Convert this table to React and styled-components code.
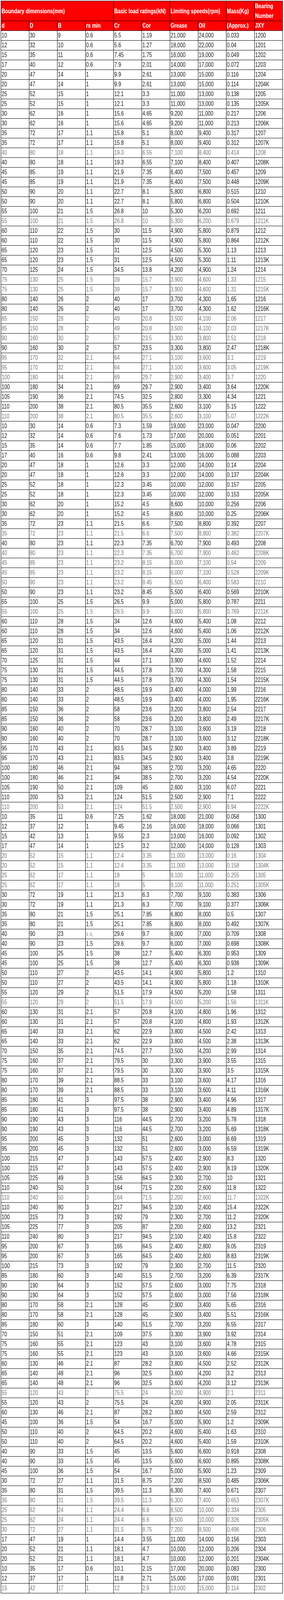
import React from "react";
import styled, {createGlobalStyle} from "styled-components";

const GlobalStyle = createGlobalStyle`
    html, body{
        margin: 0;
        padding: 0;
        background: #ffffff;
    }
    body{
        font-family: "Liberation Sans", Arial, sans-serif;
    }
`;

// one line per bearing, "g" in front marks the rows printed in grey
const raw = `
10 30 9 0.6 5.5 1.19 21,000 24,000 0.033 1200
12 32 10 0.6 5.6 1.27 18,000 22,000 0.04 1201
15 35 11 0.6 7.45 1.75 16,000 19,000 0.049 1202
17 40 12 0.6 7.9 2.01 14,000 17,000 0.072 1203
20 47 14 1 9.9 2.61 13,000 15,000 0.116 1204
20 47 14 1 9.9 2.61 13,000 15,000 0.114 1204K
25 52 15 1 12.1 3.3 11,000 13,000 0.138 1205
25 52 15 1 12.1 3.3 11,000 13,000 0.135 1205K
30 62 16 1 15.6 4.65 9,200 11,000 0.217 1206
30 62 16 1 15.6 4.65 9,200 11,000 0.213 1206K
35 72 17 1.1 15.8 5.1 8,000 9,400 0.317 1207
35 72 17 1.1 15.8 5.1 8,000 9,400 0.312 1207K
g 40 80 18 1.1 19.3 6.55 7,100 8,400 0.414 1208
40 80 18 1.1 19.3 6.55 7,100 8,400 0.407 1208K
45 85 19 1.1 21.9 7.35 6,400 7,500 0.457 1209
45 85 19 1.1 21.9 7.35 6,400 7,500 0.448 1209K
50 90 20 1.1 22.7 8.1 5,800 6,800 0.515 1210
50 90 20 1.1 22.7 8.1 5,800 6,800 0.504 1210K
55 100 21 1.5 26.8 10 5,300 6,200 0.692 1211
g 55 100 21 1.5 26.8 10 5,300 6,200 0.679 1211K
60 110 22 1.5 30 11.5 4,900 5,800 0.879 1212
60 110 22 1.5 30 11.5 4,900 5,800 0.864 1212K
65 120 23 1.5 31 12.5 4,500 5,300 1.13 1213
65 120 23 1.5 31 12.5 4,500 5,300 1.11 1213K
70 125 24 1.5 34.5 13.8 4,200 4,900 1.24 1214
g 75 130 25 1.5 39 15.7 3,900 4,600 1.33 1215
g 75 130 25 1.5 39 15.7 3,900 4,600 1.31 1215K
80 140 26 2 40 17 3,700 4,300 1.65 1216
80 140 26 2 40 17 3,700 4,300 1.62 1216K
g 85 150 28 2 49 20.8 3,500 4,100 2.06 1217
g 85 150 28 2 49 20.8 3,500 4,100 2.03 1217K
g 90 160 30 2 57 23.5 3,300 3,800 2.51 1218
90 160 30 2 57 23.5 3,300 3,800 2.47 1218K
g 95 170 32 2.1 64 27.1 3,100 3,600 3.1 1219
g 95 170 32 2.1 64 27.1 3,100 3,600 3.05 1219K
g 100 180 34 2.1 69 29.7 2,900 3,400 3.7 1220
100 180 34 2.1 69 29.7 2,900 3,400 3.64 1220K
105 190 36 2.1 74.5 32.5 2,800 3,300 4.34 1221
110 200 38 2.1 80.5 35.5 2,600 3,100 5.15 1222
g 110 200 38 2.1 80.5 35.5 2,600 3,100 5.07 1222K
10 30 14 0.6 7.3 1.59 19,000 23,000 0.047 2200
12 32 14 0.6 7.6 1.73 17,000 20,000 0.051 2201
15 35 14 0.6 7.7 1.85 15,000 18,000 0.06 2202
17 40 16 0.6 9.8 2.41 13,000 16,000 0.088 2203
20 47 18 1 12.6 3.3 12,000 14,000 0.14 2204
20 47 18 1 12.6 3.3 12,000 14,000 0.137 2204K
25 52 18 1 12.3 3.45 10,000 12,000 0.157 2205
25 52 18 1 12.3 3.45 10,000 12,000 0.153 2205K
30 62 20 1 15.2 4.5 8,600 10,000 0.256 2206
30 62 20 1 15.2 4.5 8,600 10,000 0.25 2206K
35 72 23 1.1 21.5 6.6 7,500 8,800 0.392 2207
g 35 72 23 1.1 21.5 6.6 7,500 8,800 0.382 2207K
40 80 23 1.1 22.3 7.35 6,700 7,900 0.493 2208
g 40 80 23 1.1 22.3 7.35 6,700 7,900 0.482 2208K
g 45 85 23 1.1 23.2 8.15 6,000 7,100 0.54 2209
g 45 85 23 1.1 23.2 8.15 6,000 7,100 0.528 2209K
g 50 90 23 1.1 23.2 8.45 5,500 6,400 0.583 2210
50 90 23 1.1 23.2 8.45 5,500 6,400 0.569 2210K
55 100 25 1.5 26.5 9.9 5,000 5,800 0.787 2211
g 55 100 25 1.5 26.5 9.9 5,000 5,800 0.769 2211K
60 110 28 1.5 34 12.6 4,600 5,400 1.08 2212
60 110 28 1.5 34 12.6 4,600 5,400 1.06 2212K
65 120 31 1.5 43.5 16.4 4,200 5,000 1.44 2213
65 120 31 1.5 43.5 16.4 4,200 5,000 1.41 2213K
70 125 31 1.5 44 17.1 3,900 4,600 1.52 2214
75 130 31 1.5 44.5 17.8 3,700 4,300 1.58 2215
75 130 31 1.5 44.5 17.8 3,700 4,300 1.54 2215K
80 140 33 2 48.5 19.9 3,400 4,000 1.99 2216
80 140 33 2 48.5 19.9 3,400 4,000 1.95 2216K
85 150 36 2 58 23.6 3,200 3,800 2.54 2217
85 150 36 2 58 23.6 3,200 3,800 2.49 2217K
90 160 40 2 70 28.7 3,100 3,600 3.19 2218
90 160 40 2 70 28.7 3,100 3,600 3.12 2218K
95 170 43 2.1 83.5 34.5 2,900 3,400 3.89 2219
95 170 43 2.1 83.5 34.5 2,900 3,400 3.8 2219K
100 180 46 2.1 94 38.5 2,700 3,200 4.65 2220
100 180 46 2.1 94 38.5 2,700 3,200 4.54 2220K
105 190 50 2.1 109 45 2,600 3,100 6.07 2221
110 200 53 2.1 124 51.5 2,500 2,900 7.1 2222
g 110 200 53 2.1 124 51.5 2,500 2,900 6.94 2222K
10 35 11 0.6 7.25 1.62 18,000 21,000 0.058 1300
12 37 12 1 9.45 2.16 16,000 18,000 0.066 1301
15 42 13 1 9.55 2.3 13,000 16,000 0.092 1302
17 47 14 1 12.5 3.2 12,000 14,000 0.128 1303
g 20 52 15 1.1 12.4 3.35 11,000 13,000 0.16 1304
g 20 52 15 1.1 12.4 3.35 11,000 13,000 0.158 1304K
g 25 62 17 1.1 18 5 9,100 11,000 0.255 1305
g 25 62 17 1.1 18 5 9,100 11,000 0.251 1305K
30 72 19 1.1 21.3 6.3 7,700 9,100 0.383 1306
30 72 19 1.1 21.3 6.3 7,700 9,100 0.377 1306K
35 80 21 1.5 25.1 7.85 6,800 8,000 0.5 1307
35 80 21 1.5 25.1 7.85 6,800 8,000 0.492 1307K
40 90 23 1.5, 29.6 9.7 6,000 7,000 0.709 1308
40 90 23 1.5 29.6 9.7 6,000 7,000 0.698 1308K
45 100 25 1.5 38 12.7 5,400 6,300 0.953 1309
45 100 25 1.5 38 12.7 5,400 6,300 0.938 1309K
50 110 27 2 43.5 14.1 4,900 5,800 1.2 1310
50 110 27 2 43.5 14.1 4,900 5,800 1.18 1310K
55 120 29 2 51.5 17.9 4,500 5,200 1.58 1311
g 55 120 29 2 51.5 17.9 4,500 5,200 1.56 1311K
60 130 31 2.1 57 20.8 4,100 4,800 1.96 1312
60 130 31 2.1 57 20.8 4,100 4,800 1.93 1312K
65 140 33 2.1 62 22.9 3,800 4,500 2.42 1313
65 140 33 2.1 62 22.9 3,800 4,500 2.38 1313K
70 150 35 2.1 74.5 27.7 3,500 4,200 2.99 1314
75 160 37 2.1 79.5 30 3,300 3,900 3.55 1315
75 160 37 2.1 79.5 30 3,300 3,900 3.5 1315K
80 170 39 2.1 88.5 33 3,100 3,600 4.17 1316
80 170 39 2.1 88.5 33 3,100 3,600 4.11 1316K
85 180 41 3 97.5 38 2,900 3,400 4.96 1317
85 180 41 3 97.5 38 2,900 3,400 4.89 1317K
90 190 43 3 116 44.5 2,700 3,200 5.78 1318
90 190 43 3 116 44.5 2,700 3,200 5.69 1318K
95 200 45 3 132 51 2,600 3,000 6.69 1319
95 200 45 3 132 51 2,600 3,000 6.59 1319K
100 215 47 3 143 57.5 2,400 2,900 8.3 1320
100 215 47 3 143 57.5 2,400 2,900 8.19 1320K
105 225 49 3 156 64.5 2,300 2,700 10 1321
110 240 50 3 164 71.5 2,200 2,600 11.8 1322
g 110 240 50 3 164 71.5 2,200 2,600 11.7 1322K
110 240 80 3 217 94.5 2,100 2,400 15.4 2322K
100 215 73 3 192 79 2,300 2,700 11.2 2320K
105 225 77 3 205 87 2,200 2,600 13.2 2321
110 240 80 3 217 94.5 2,100 2,400 15.8 2322
95 200 67 3 165 64.5 2,400 2,800 9.05 2319
95 200 67 3 165 64.5 2,400 2,800 8.83 2319K
100 215 73 3 192 79 2,300 2,700 11.5 2320
85 180 60 3 140 51.5 2,700 3,200 6.39 2317K
90 190 64 3 152 57.5 2,600 3,000 7.75 2318
90 190 64 3 152 57.5 2,600 3,000 7.56 2318K
80 170 58 2.1 128 45 2,900 3,400 5.65 2316
80 170 58 2.1 128 45 2,900 3,400 5.51 2316K
85 180 60 3 140 51.5 2,700 3,200 6.55 2317
70 150 51 2.1 109 37.5 3,300 3,900 3.92 2314
75 160 55 2.1 123 43 3,100 3,600 4.78 2315
75 160 55 2.1 123 43 3,100 3,600 4.66 2315K
60 130 46 2.1 87 28.2 3,800 4,500 2.52 2312K
65 140 48 2.1 96 32.5 3,600 4,200 3.2 2313
65 140 48 2.1 96 32.5 3,600 4,200 3.12 2313K
g 55 120 43 2 75.5 24 4,200 4,900 2.1 2311
55 120 43 2 75.5 24 4,200 4,900 2.05 2311K
60 130 46 2.1 87 28.2 3,800 4,500 2.59 2312
45 100 36 1.5 54 16.7 5,000 5,900 1.2 2309K
50 110 40 2 64.5 20.2 4,600 5,400 1.63 2310
50 110 40 2 64.5 20.2 4,600 5,400 1.59 2310K
40 90 33 1.5 45 13.5 5,600 6,600 0.918 2308
40 90 33 1.5 45 13.5 5,600 6,600 0.895 2308K
45 100 36 1.5 54 16.7 5,000 5,900 1.23 2309
30 72 27 1.1 31.5 8.75 7,200 8,500 0.485 2306K
35 80 31 1.5 39.5 11.3 6,300 7,400 0.671 2307
g 35 80 31 1.5 39.5 11.3 6,300 7,400 0.653 2307K
g 25 62 24 1.1 24.4 6.6 8,500 10,000 0.334 2305
g 25 62 24 1.1 24.4 6.6 8,500 10,000 0.326 2305K
g 30 72 27 1.1 31.5 8.75 7,200 8,500 0.496 2306
17 47 19 1 14.4 3.55 11,000 14,000 0.156 2303
20 52 21 1.1 18.1 4.7 10,000 12,000 0.206 2304
20 52 21 1.1 18.1 4.7 10,000 12,000 0.201 2304K
10 35 17 0.6 10.1 2.15 17,000 20,000 0.083 2300
12 37 17 1 11.8 2.71 15,000 17,000 0.091 2301
g 15 42 17 1 12 2.9 13,000 15,000 0.114 2302
`;

const rows = raw.trim().split("\n").map(line => {
    const parts = line.trim().split(/\s+/);
    const muted = parts[0] === "g";
    return {muted: muted, cells: muted ? parts.slice(1) : parts};
});

const groups = [
    {label: "Boundary dimensions(mm)", span: 4},
    {label: "Basic load ratings(kN)", span: 2},
    {label: "Limiting speeds(rpm)", span: 2},
    {label: "Mass(Kg)", span: 1},
    {label: "Bearing Number", span: 1, wrap: true},
];

const columns = ["d", "D", "B", "rs min", "Cr", "Cor", "Grease", "Oil", "(Approx.)", "JXY"];

const App = () => {
    return <Page>
        <GlobalStyle/>
        <SpecTable>
            <colgroup>
                {columns.map(c => <Col key={c}/>)}
            </colgroup>
            <thead>
                <tr>
                    {groups.map(g =>
                        <GroupCell key={g.label} colSpan={g.span}>
                            <Narrow $wrap={g.wrap}>{g.label}</Narrow>
                        </GroupCell>
                    )}
                </tr>
                <tr>
                    {columns.map(c => <HeadCell key={c}><Narrow>{c}</Narrow></HeadCell>)}
                </tr>
            </thead>
            <tbody>
                {rows.map((row, i) =>
                    <tr key={i}>
                        {row.cells.map((v, j) =>
                            <Cell key={j} $muted={row.muted}>
                                {v.endsWith(",") ? <Note>{v}</Note> : <Narrow>{v}</Narrow>}
                            </Cell>
                        )}
                    </tr>
                )}
            </tbody>
        </SpecTable>
    </Page>
};

const Page = styled.div`
    padding: 2px 4px 0 2px;
`;

const SpecTable = styled.table`
    width: 720px;
    table-layout: fixed;
    border-collapse: collapse;
    border: 1px solid #000;
    font-size: 16px;
`;

const Col = styled.col`
    width: 72px;
`;

// the sheet is set in a narrow face, so squeeze the glyphs
const Narrow = styled.span`
    display: inline-block;
    white-space: ${props => props.$wrap ? "normal" : "nowrap"};
    transform: scaleX(0.78);
    transform-origin: 0 50%;
`;

const GroupCell = styled.th`
    height: 48px;
    padding: 0 1px;
    background: #ff0000;
    color: #ffffff;
    font-weight: bold;
    text-align: left;
    line-height: 25px;
    vertical-align: middle;
    white-space: nowrap;
    overflow: visible;
    border: 1px solid #1a0000;
`;

const HeadCell = styled.th`
    height: 24px;
    padding: 0 1px;
    background: #ff0000;
    color: #ffffff;
    font-weight: bold;
    text-align: left;
    vertical-align: middle;
    white-space: nowrap;
    border: 1px solid #1a0000;
`;

const Cell = styled.td`
    height: 24px;
    padding: 0 1px;
    color: ${props => props.$muted ? "#7a7a7a" : "#1e1e1e"};
    text-align: left;
    vertical-align: middle;
    white-space: nowrap;
    border: 1px solid #000;
`;

const Note = styled.span`
    font-size: 11px;
    color: #777;
`;

export default App;
